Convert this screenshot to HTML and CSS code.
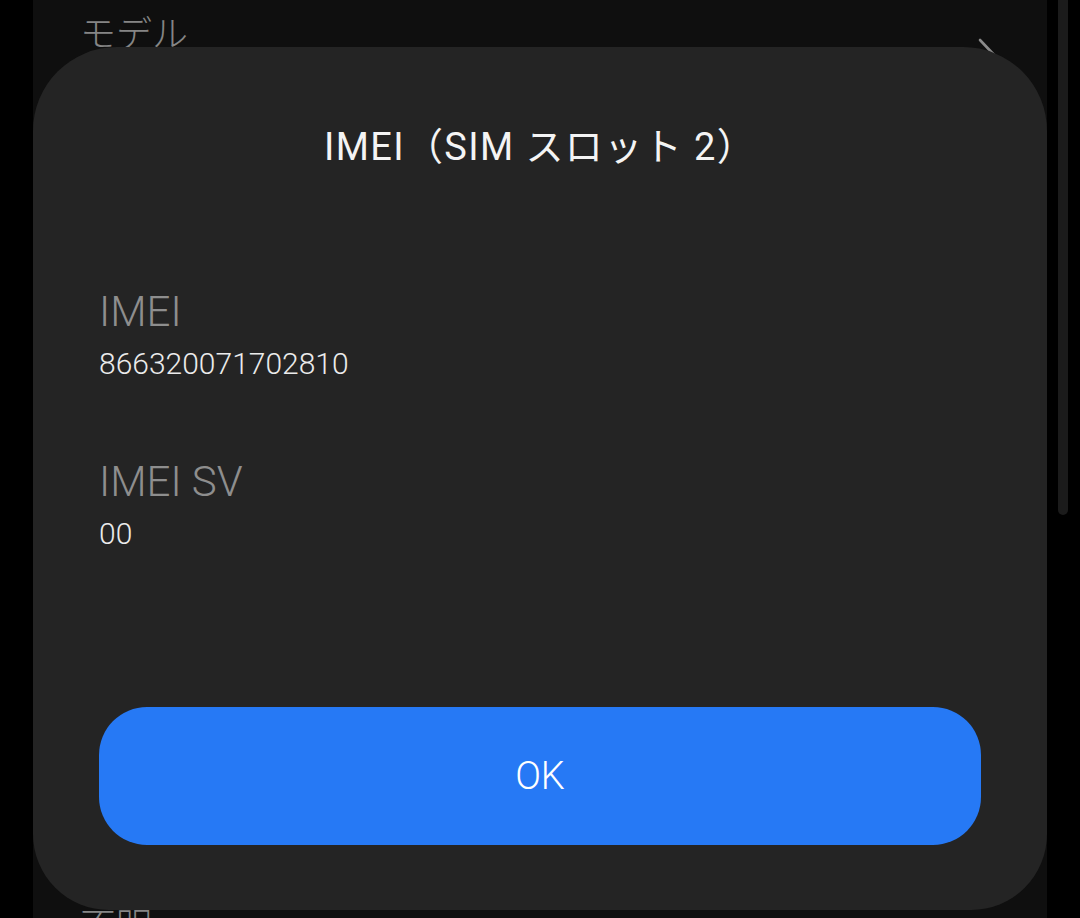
FILE: index.html
```html
<!DOCTYPE html>
<html lang="ja">
<head>
<meta charset="utf-8">
<title>IMEI</title>
<link rel="stylesheet" href="styles.css">
</head>
<body>
<div class="screen">
  <div class="settings">
    <div class="row row-model">
      <span class="row-label">モデル</span>
      <svg class="chevron" width="26" height="34" viewBox="0 0 26 34"><path d="M3 2 L20 20" stroke="#8a8a8a" stroke-width="2.6" fill="none" stroke-linecap="round"/></svg>
    </div>
    <div class="row row-unknown">
      <span class="row-label">不明</span>
    </div>
  </div>
  <div class="scrollbar"></div>

  <div class="dialog">
    <h1 class="dialog-title">IMEI（SIM スロット 2）</h1>
    <div class="fields">
      <div class="field">
        <div class="field-label">IMEI</div>
        <div class="field-value">866320071702810</div>
      </div>
      <div class="field">
        <div class="field-label">IMEI SV</div>
        <div class="field-value">00</div>
      </div>
    </div>
    <button class="ok-button">OK</button>
  </div>
</div>
</body>
</html>
```

FILE: styles.css
```css
html, body {
  margin: 0;
  padding: 0;
  background: #000;
}

body {
  font-family: Roboto, "Noto Sans CJK JP", sans-serif;
  font-weight: 300;
}

.screen {
  position: relative;
  width: 1080px;
  height: 918px;
  overflow: hidden;
}

/* settings list behind the dialog */
.settings {
  margin-left: 33px;
  width: 1014px;
  height: 918px;
  background: #0f0f0f;
  display: flex;
  flex-direction: column;
  justify-content: space-between;
}

.row {
  display: flex;
  align-items: flex-start;
  justify-content: space-between;
  padding: 0 44px 0 47px;
}

.row-model {
  margin-top: 6px;
}

.row-unknown {
  margin-bottom: -30px;
}

.row-label {
  font-family: "Noto Sans CJK JP", sans-serif;
  font-weight: 300;
  font-size: 36px;
  line-height: 50px;
  color: #858585;
}

.chevron {
  margin-top: 32px;
}

.scrollbar {
  position: absolute;
  left: 1058px;
  top: -10px;
  width: 10px;
  height: 525px;
  border-radius: 5px;
  background: #1b1b1b;
}

/* modal dialog */
.dialog {
  position: absolute;
  left: 33px;
  top: 47px;
  width: 1014px;
  height: 863px;
  box-sizing: border-box;
  padding: 76px 66px 0;
  background: #242424;
  border-radius: 84px 84px 76px 76px;
  display: flex;
  flex-direction: column;
}

.dialog-title {
  margin: 0;
  font-size: 38px;
  line-height: 48px;
  font-weight: 400;
  letter-spacing: 1.4px;
  color: #f4f4f4;
  text-align: center;
}

.fields {
  margin-top: 115px;
  display: flex;
  flex-direction: column;
  gap: 72px;
}

.field-label {
  font-size: 42px;
  line-height: 52px;
  color: #8e8e8e;
  font-weight: 300;
}

.field-value {
  margin-top: 6px;
  font-size: 30px;
  line-height: 40px;
  color: #ebebeb;
}

.ok-button {
  margin-top: auto;
  margin-bottom: 65px;
  height: 138px;
  border: none;
  border-radius: 48px;
  background: #2679f5;
  color: #ffffff;
  font-family: inherit;
  font-weight: 300;
  font-size: 38px;
}
```
